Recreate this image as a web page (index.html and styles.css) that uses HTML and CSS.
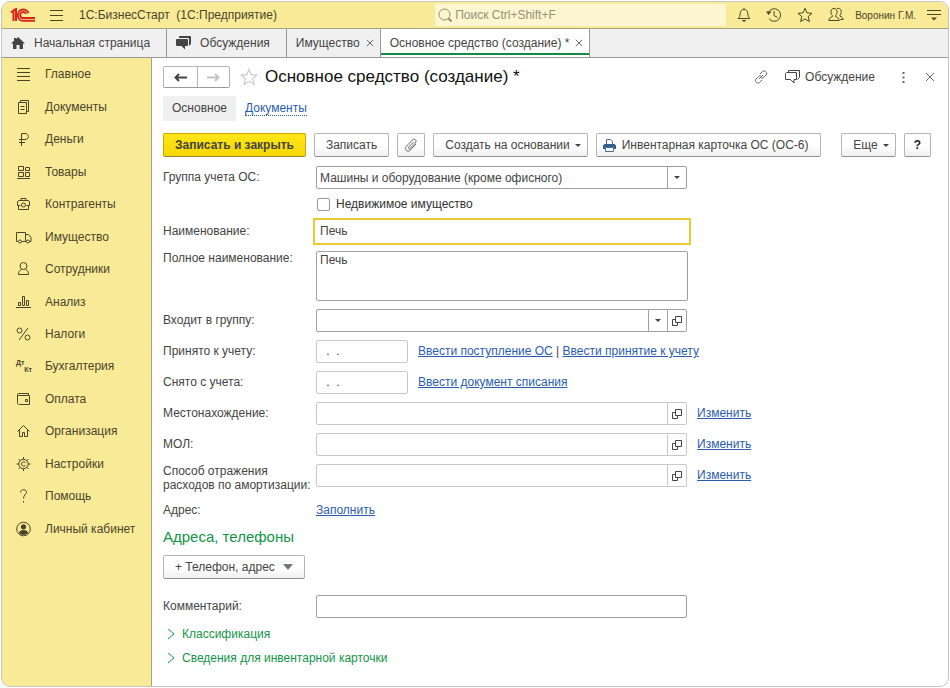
FILE: index.html
```html
<!DOCTYPE html>
<html lang="ru">
<head>
  <meta charset="UTF-8">
  <meta name="viewport" content="width=device-width, initial-scale=1.0">
  <title>1С:БизнесСтарт | Основное средство</title>
  <link rel="stylesheet" href="styles.css">
</head>
<body>
  <!-- общие иконки -->
  <svg class="sprite" width="0" height="0" aria-hidden="true">
    <symbol id="open" viewBox="0 0 10 10"><path d="M3.500 .5h6v6h-6zM3.500 3.500h-3v6h5v-3" /></symbol>
    <symbol id="chevron" viewBox="0 0 8 12"><path d="M1 1l6 5-6 5" /></symbol>
    <symbol id="cross" viewBox="0 0 10 10"><path d="M1 1l8 8M9 1L1 9" /></symbol>
    <symbol id="star" viewBox="0 0 16 16"><path d="M8 1.200l2 4.700 5 .4-3.800 3.300 1.200 5L8 11.900l-4.400 2.700 1.200-5L1 6.300l5-.4z" /></symbol>
  </svg>

  <div class="window">
    <header class="topbar">
      <svg class="logo" width="26" height="15" viewBox="0 0 26 15" aria-label="1С">
        <path d="M1 4.500l2.500-2V13M3.500 2.500L6 1v12" />
        <path d="M18.500 5A5.600 5.600 0 1 0 13.500 12.800H25" />
        <path d="M16 6A3 3 0 1 0 13.500 10H25" />
      </svg>
      <button class="icon-btn menu-btn" aria-label="Меню">
        <svg width="13" height="12" viewBox="0 0 13 12"><path d="M0 1.500h13M0 6.500h13M0 11.500h13" /></svg>
      </button>
      <span class="app-name">1С:БизнесСтарт&nbsp; (1С:Предприятие)</span>
      <label class="search">
        <svg width="15" height="15" viewBox="0 0 15 15"><circle cx="6.500" cy="6.500" r="5.500" /><path d="M10.500 10.500l3 3" stroke-width="2" /></svg>
        <input type="search" placeholder="Поиск Ctrl+Shift+F" aria-label="Поиск">
      </label>
      <div class="top-actions">
        <button class="icon-btn" aria-label="Уведомления">
          <svg width="14" height="16" viewBox="0 0 14 16"><path d="M7 1v1M1 11.500h12c-1.800-1.500-2-2.500-2.200-5C10.600 4 9.300 2.500 7 2.500S3.400 4 3.200 6.500C3 9 2.800 10 1 11.500z" /><path class="solid" d="M4.500 13h5l-2.500 2z" /></svg>
        </button>
        <button class="icon-btn" aria-label="История">
          <svg width="16" height="16" viewBox="0 0 16 16"><path d="M2.500 5.500A6.300 6.300 0 1 1 3 11.500M8 4v4.500l3.500 2" /><path class="solid" d="M0 4.500h5.500L2.500 8z" /></svg>
        </button>
        <button class="icon-btn" aria-label="Избранное">
          <svg width="16" height="16"><use href="#star" /></svg>
        </button>
        <button class="icon-btn" aria-label="Пользователи">
          <svg width="16" height="16" viewBox="0 0 16 16"><path d="M6 1.500c2.200 0 3.200 1.500 3 3.800-.1 1.700-.8 2.700-1.300 3.200v1.200c1.500.8 3.200 1 3.500 3.800H.8c.3-2.800 2-3 3.500-3.800V8.500C3.800 8 3.100 7 3 5.300c-.2-2.300.8-3.800 3-3.800z" /><path d="M9 1.500c2.800-.8 4.500 1 4.200 3.800-.1 1.500-.7 2.200-1.200 2.700v1.200c1.500.8 2.800 1 3.200 3.300h-3" /></svg>
        </button>
        <button class="user">Воронин Г.М.</button>
        <button class="icon-btn" aria-label="Настройки окна">
          <svg width="14" height="12" viewBox="0 0 14 12"><path d="M0 1.500h14M0 5.500h14" /><path class="solid" d="M4 8.500h6l-3 3z" /></svg>
        </button>
      </div>
    </header>

    <nav class="tabs">
      <a class="tab tab-home" href="#">
        <svg class="solid" width="14" height="12" viewBox="0 0 14 12"><path d="M7 0l7 6.500h-2V12H8.500V8h-3v4H2V6.500H0l3-2.800V1h2v1z" /></svg>
        Начальная страница
      </a>
      <a class="tab tab-talks" href="#">
        <svg class="solid" width="15" height="14" viewBox="0 0 15 14"><path d="M4 0h10a1 1 0 0 1 1 1v7l-2 2V3a1 1 0 0 0-1-1H3V1a1 1 0 0 1 1-1z" /><path d="M1 3h10a1 1 0 0 1 1 1v5a1 1 0 0 1-1 1H9v3.500L5.500 10H1a1 1 0 0 1-1-1V4a1 1 0 0 1 1-1z" /></svg>
        Обсуждения
      </a>
      <a class="tab" href="#">Имущество <svg width="8" height="8"><use href="#cross" /></svg></a>
      <a class="tab active" href="#">Основное средство (создание) * <svg width="8" height="8"><use href="#cross" /></svg></a>
    </nav>

    <div class="workspace">
      <nav class="sidebar">
        <a href="#"><svg viewBox="0 0 16 16"><path d="M1 2.500h13M1 6.500h13M1 10.500h13M1 14.500h13" /></svg>Главное</a>
        <a href="#"><svg viewBox="0 0 16 16"><path d="M2.500 3.500h8v11h-8zM4.500 3V1.500h8v11H11M4.500 7.500h4M4.500 10.500h4" /></svg>Документы</a>
        <a href="#"><svg viewBox="0 0 16 16"><path d="M5.500 15V2.500H9c4.500 0 4.500 6 0 6H3M3 11.500h6" /></svg>Деньги</a>
        <a href="#"><svg viewBox="0 0 16 16"><path d="M2.500 2.500h5v4h-5zM9.500 3.500h4v3h-4zM2.500 8.500h5v4h-5zM9.500 8.500h4v4h-4zM1 14.500h13" /></svg>Товары</a>
        <a href="#"><svg viewBox="0 0 16 16"><path d="M5 4V2.500h5V4M3 4.500h9l1.500 1v4h-3M1.500 5.500v4h3M1.500 5.500l1.500-1M2.500 9.500v4h10v-4" /><circle cx="7.500" cy="9" r="2" /></svg>Контрагенты</a>
        <a href="#"><svg viewBox="0 0 16 16"><path d="M2 12.500H.5v-9h9v9H6M9.500 5.500h3l2.500 3v4h-1.500M9.500 12.500h1" /><circle cx="4" cy="12.500" r="1.500" /><circle cx="12" cy="12.500" r="1.500" /></svg>Имущество</a>
        <a href="#"><svg viewBox="0 0 16 16"><circle cx="7.500" cy="5" r="3.500" /><path d="M5.500 8.500c-2 1-3 2-3 5h10c0-3-1-4-3-5" /></svg>Сотрудники</a>
        <a href="#"><svg viewBox="0 0 16 16"><path d="M2.500 8.500h2v3h-2zM6.500 2.500h2v9h-2zM10.500 6.500h2v5h-2zM0 13.500h15" /></svg>Анализ</a>
        <a href="#"><svg viewBox="0 0 16 16"><circle cx="3.500" cy="4.500" r="2.500" /><circle cx="11.500" cy="11.500" r="2.500" /><path d="M12 2L3 14" /></svg>Налоги</a>
        <a href="#"><span class="dtkt"><span>Дт</span><span>Кт</span></span>Бухгалтерия</a>
        <a href="#"><svg viewBox="0 0 16 16"><path d="M12.500 4.500V2.500h-10c-1.300 0-1.300 2 0 2h11v9h-10c-1.500 0-2-.5-2-2v-8" /><path d="M9.500 8.500h2v2h-2z" /></svg>Оплата</a>
        <a href="#"><svg viewBox="0 0 16 16"><path d="M1.500 8.500l6-6 6 6M3.500 7v6.500h3v-4h2v4h3V7" /></svg>Организация</a>
        <a href="#"><svg viewBox="0 0 16 16"><circle cx="7.500" cy="8" r="4.700" /><path d="M9.500 6.700a2.200 2.200 0 1 0 0 2.600M7.500 3.300V1M7.500 15v-2.300M2.800 8H.5M14.500 8h-2.300M4.200 4.700L2.600 3.100M10.800 4.700l1.600-1.600M4.200 11.300l-1.600 1.600M10.800 11.300l1.600 1.600" /></svg>Настройки</a>
        <a href="#"><svg viewBox="0 0 16 16"><path d="M4.500 4.500c0-4 6.500-3.500 6 0-.3 2-3 2.500-3 6M7.500 13v1.500" /></svg>Помощь</a>
        <a href="#"><svg viewBox="0 0 16 16"><circle cx="7.500" cy="8" r="6.800" /><circle class="solid" cx="7.500" cy="5.800" r="2.600" /><path class="solid" d="M3 12c0-4 9-4 9 0-2 2.500-7 2.500-9 0z" /></svg>Личный кабинет</a>
      </nav>

      <main class="content">
        <div class="title-row">
          <div class="history">
            <button aria-label="Назад"><svg width="13" height="9" viewBox="0 0 13 9"><path d="M13 4.500H2M5 1L1.500 4.500 5 8" /></svg></button>
            <button aria-label="Вперед" disabled><svg width="13" height="9" viewBox="0 0 13 9"><path d="M0 4.500h11M8 1l3.500 3.500L8 8" /></svg></button>
          </div>
          <button class="icon-btn favorite" aria-label="В избранное"><svg width="18" height="18"><use href="#star" /></svg></button>
          <h1>Основное средство (создание) *</h1>
          <div class="title-actions">
            <button class="icon-btn" aria-label="Ссылка">
              <svg width="14" height="14" viewBox="0 0 14 14"><path d="M5 9l4-4M6 4l2.500-2.500c2-1.800 5.500 1 3.500 3.500L9.500 7.500C8.700 8.300 8 8.400 7 8M8 10l-2.500 2.500C3.500 14.300 0 11.500 2 9l2.500-2.500C5.300 5.700 6 5.600 7 6" /></svg>
            </button>
            <button class="icon-btn discuss">
              <svg width="15" height="14" viewBox="0 0 15 14"><path d="M3.500 2V.5h11v7l-2 2M1.500 2.500h10v7H9V13L5.500 9.500H.5v-6z" /></svg>
              Обсуждение
            </button>
            <button class="icon-btn dots" aria-label="Еще"><svg width="3" height="11" viewBox="0 0 3 11"><path class="solid" d="M.5 0h2v2h-2zM.5 4.500h2v2h-2zM.5 9h2v2h-2z" /></svg></button>
            <button class="icon-btn" aria-label="Закрыть"><svg width="10" height="10"><use href="#cross" /></svg></button>
          </div>
        </div>

        <div class="subtabs">
          <span class="current">Основное</span>
          <a href="#">Документы</a>
        </div>

        <div class="toolbar">
          <button class="btn primary">Записать и закрыть</button>
          <button class="btn">Записать</button>
          <button class="btn clip" aria-label="Присоединенные файлы">
            <svg width="14" height="14" viewBox="0 0 14 14"><path d="M9.500 4L4.800 9c-1 1.200.5 2.400 1.500 1.400l5-5.400C13.500 2.500 10.500-.2 8.300 2L2.500 8.200C-.5 11.500 3.500 15 6.500 12l5.500-6" /></svg>
          </button>
          <button class="btn has-menu">Создать на основании <i class="caret"></i></button>
          <button class="btn print">
            <svg width="13" height="13" viewBox="0 0 13 13"><path fill="#fff" stroke="#4a6a8c" d="M3.500 5.500v-5h4l2 2v3" /><path fill="#31618f" d="M1.500 5h10L13 6.500V10h-2V8H2v2H0V6.500z" /><path fill="#fff" stroke="#4a6a8c" d="M2.500 8.500h8v4h-8z" /></svg>
            Инвентарная карточка ОС (ОС-6)
          </button>
          <button class="btn has-menu more">Еще <i class="caret"></i></button>
          <button class="btn help">?</button>
        </div>

        <form class="form">
          <div class="row">
            <label for="assetGroup">Группа учета ОС:</label>
            <div class="field">
              <select id="assetGroup"><option>Машины и оборудование (кроме офисного)</option></select>
              <button type="button" aria-label="Выбрать"><i class="caret"></i></button>
            </div>
          </div>
          <div class="row check-row">
            <input type="checkbox" id="realty">
            <label for="realty">Недвижимое имущество</label>
          </div>
          <div class="row">
            <label for="name">Наименование:</label>
            <div class="field focused"><input type="text" id="name" value="Печь"></div>
          </div>
          <div class="row text-row">
            <label for="fullName">Полное наименование:</label>
            <textarea id="fullName">Печь</textarea>
          </div>
          <div class="row">
            <label for="parent">Входит в группу:</label>
            <div class="field">
              <select id="parent"><option></option></select>
              <button type="button" aria-label="Выбрать"><i class="caret"></i></button>
              <button type="button" aria-label="Открыть"><svg width="10" height="10"><use href="#open" /></svg></button>
            </div>
          </div>
          <div class="row">
            <label for="accepted">Принято к учету:</label>
            <div class="field light date"><input type="text" id="accepted" value=" .  ."></div>
            <span class="links"><a href="#">Ввести поступление ОС</a> | <a href="#">Ввести принятие к учету</a></span>
          </div>
          <div class="row">
            <label for="removed">Снято с учета:</label>
            <div class="field light date"><input type="text" id="removed" value=" .  ."></div>
            <span class="links"><a href="#">Ввести документ списания</a></span>
          </div>
          <div class="row">
            <label for="place">Местонахождение:</label>
            <div class="field light">
              <input type="text" id="place">
              <button type="button" aria-label="Открыть"><svg width="10" height="10"><use href="#open" /></svg></button>
            </div>
            <span class="links"><a href="#">Изменить</a></span>
          </div>
          <div class="row">
            <label for="mol">МОЛ:</label>
            <div class="field light">
              <input type="text" id="mol">
              <button type="button" aria-label="Открыть"><svg width="10" height="10"><use href="#open" /></svg></button>
            </div>
            <span class="links"><a href="#">Изменить</a></span>
          </div>
          <div class="row">
            <label class="two-lines" for="expense">Способ отражения<br>расходов по амортизации:</label>
            <div class="field light">
              <input type="text" id="expense">
              <button type="button" aria-label="Открыть"><svg width="10" height="10"><use href="#open" /></svg></button>
            </div>
            <span class="links"><a href="#">Изменить</a></span>
          </div>
          <div class="row address-row">
            <span class="caption">Адрес:</span>
            <a href="#">Заполнить</a>
          </div>

          <h2>Адреса, телефоны</h2>
          <button type="button" class="btn add-contact">+ Телефон, адрес <i class="caret big"></i></button>

          <div class="row comment-row">
            <label for="comment">Комментарий:</label>
            <div class="field"><input type="text" id="comment"></div>
          </div>

          <button type="button" class="expander"><svg width="8" height="12"><use href="#chevron" /></svg>Классификация</button>
          <button type="button" class="expander"><svg width="8" height="12"><use href="#chevron" /></svg>Сведения для инвентарной карточки</button>
        </form>
      </main>
    </div>
  </div>
</body>
</html>
```
FILE: styles.css
```css
* {
  box-sizing: border-box;
}
body {
  margin: 0;
  padding: 1px;
  background: #fff;
  color: #444;
  font-family: "Liberation Sans", Arial, sans-serif;
  font-size: 12px;
}
button, input, select, textarea {
  font: inherit;
  color: inherit;
  margin: 0;
}
button {
  padding: 0;
  border: none;
  background: none;
  cursor: pointer;
}
svg {
  flex: none;
  fill: none;
  stroke: currentColor;
}
.solid {
  fill: currentColor;
  stroke: none;
}
.sprite {
  position: absolute;
}
a {
  color: #2a5db0;
}
.window {
  display: flex;
  flex-direction: column;
  min-height: calc(100vh - 2px);
  border: 1px solid #c4c4c4;
  border-radius: 9px;
  overflow: hidden;
}

/* верхняя панель */
.topbar {
  display: flex;
  align-items: center;
  height: 27px;
  padding: 0 7px 0 8px;
  background: #f9ea98;
  border-bottom: 1px solid #a8a180;
  color: #4a4528;
}
.logo {
  color: #d8261c;
  stroke-width: 2;
}
.icon-btn {
  display: flex;
  align-items: center;
}
.menu-btn {
  margin-left: 14px;
}
.app-name {
  flex: 1;
  margin-left: 16px;
}
.search {
  display: flex;
  align-items: center;
  gap: 2px;
  width: 291px;
  height: 22px;
  padding-left: 3px;
  background: #fdf6d0;
  color: #8f8a6c;
}
.search input {
  flex: 1;
  min-width: 0;
  padding: 0;
  border: none;
  outline: none;
  background: none;
}
.search input::placeholder {
  color: #96917a;
}
.top-actions {
  display: flex;
  align-items: center;
  gap: 15px;
  margin-left: 11px;
}
.user {
  margin: 0 -4px;
  font-size: 10px;
}

/* открытые окна */
.tabs {
  display: flex;
  height: 29px;
  background: #f0f0f0;
  border-bottom: 1px solid #999;
}
.tab {
  display: flex;
  align-items: center;
  gap: 6px;
  padding: 0 6px 0 9px;
  border-right: 1px solid #999;
  color: #444;
  text-decoration: none;
}
.tab-home, .tab-talks {
  gap: 9px;
  padding-right: 16px;
}
.tab.active {
  background: #fff;
  box-shadow: inset 0 -2px #fff, inset 0 -4px #168a43;
}

.workspace {
  display: flex;
  flex: 1;
}
.sidebar {
  display: flex;
  flex-direction: column;
  flex: none;
  width: 150px;
  padding-bottom: 141px;
  background: #f9ea98;
  border-right: 1px solid #a8a180;
}
.sidebar a {
  display: flex;
  flex: 1;
  align-items: center;
  gap: 13px;
  padding-left: 14px;
  color: #4a4528;
  text-decoration: none;
}
.sidebar svg {
  width: 16px;
  height: 16px;
}
.dtkt {
  display: flex;
  flex-direction: column;
  width: 16px;
  font-size: 7px;
  font-weight: bold;
  line-height: 7px;
}
.dtkt span:last-child {
  align-self: flex-end;
}

/* форма */
.content {
  flex: 1;
  min-width: 0;
  padding: 8px 17px 8px 11px;
}
.title-row {
  display: flex;
  align-items: center;
  height: 22px;
}
.history {
  display: flex;
  height: 22px;
  border: 1px solid #b4b4b4;
  border-bottom-color: #999;
  border-radius: 2px;
}
.history button {
  display: flex;
  align-items: center;
  justify-content: center;
  width: 33px;
  stroke-width: 2;
}
.history button + button {
  width: 32px;
  border-left: 1px solid #b4b4b4;
  color: #c4c4c4;
}
.favorite {
  margin: 0 7px 0 10px;
  color: #c8c8c8;
}
h1 {
  margin: 0;
  color: #111;
  font-size: 17px;
  font-weight: normal;
}
.title-actions {
  display: flex;
  align-items: center;
  gap: 17px;
  margin-left: auto;
  margin-right: -4px;
  color: #666;
}
.discuss {
  gap: 5px;
  color: #444;
}
.dots {
  margin: 0 3px 0 10px;
}
.subtabs {
  display: flex;
  align-items: center;
  gap: 9px;
  margin-top: 8px;
}
.subtabs .current {
  padding: 0 9px;
  background: #f0f0f0;
  line-height: 25px;
}
.subtabs a {
  border-bottom: 1px dotted #2a5db0;
  line-height: 14px;
  text-decoration: none;
}
.toolbar {
  display: flex;
  gap: 8px;
  margin-top: 12px;
}
.btn {
  display: flex;
  align-items: center;
  gap: 5px;
  height: 24px;
  padding: 0 11px;
  border: 1px solid #b4b4b4;
  border-bottom-color: #8f8f8f;
  border-radius: 2px;
  background: linear-gradient(#fff 50%, #f0f0f0);
  white-space: nowrap;
}
.btn.primary {
  border-color: #c9ab00;
  border-bottom-color: #96803c;
  background: linear-gradient(#ffe71a, #f7d600);
  font-weight: bold;
}
.btn.clip {
  padding: 0 6px;
  color: #666;
}
.btn.has-menu {
  padding-right: 6px;
}
.btn.print {
  gap: 6px;
  padding-left: 6px;
}
.btn.print svg {
  stroke: none;
}
.btn.more {
  margin-left: auto;
}
.btn.help {
  padding: 0 9px;
  color: #222;
  font-weight: bold;
}
.caret {
  border: 3px solid transparent;
  border-top-color: #444;
  border-bottom-width: 0;
}
.caret.big {
  margin-left: 3px;
  border-width: 6px 5px 0;
  border-top-color: #777;
}

.form {
  display: flex;
  flex-direction: column;
  align-items: flex-start;
  gap: 8px;
  margin-top: 9px;
}
.row {
  display: flex;
  width: 100%;
  line-height: 23px;
}
.row > label:first-child, .caption {
  flex: none;
  width: 153px;
}
.row .two-lines {
  line-height: 14px;
  white-space: nowrap;
}
.text-row {
  line-height: 15px;
}
.address-row {
  line-height: 20px;
}
.field {
  display: flex;
  width: 371px;
  height: 23px;
  border: 1px solid #a0a0a0;
  border-radius: 2px;
}
.field.light {
  border-color: #c8c8c8;
}
.field.date {
  width: 92px;
}
.field input, .field select {
  flex: 1;
  min-width: 0;
  padding: 0 3px;
  border: none;
  outline: none;
  background: none;
  appearance: none;
}
.field.date input {
  padding-left: 6px;
}
.field button {
  display: flex;
  align-items: center;
  justify-content: center;
  width: 19px;
  border-left: 1px solid #a0a0a0;
}
.field.light button {
  border-color: #c8c8c8;
}
.field.focused {
  width: 378px;
  height: 27px;
  margin: -2px -3px;
  border: 2px solid #eac933;
  border-radius: 0;
}
.field.focused input {
  padding-left: 5px;
}
textarea {
  width: 372px;
  height: 50px;
  padding: 1px 3px;
  border: 1px solid #a0a0a0;
  border-radius: 2px;
  line-height: 15px;
  resize: none;
}
.check-row {
  align-items: center;
  gap: 6px;
  padding-left: 154px;
  color: #333;
  line-height: 15px;
}
.check-row input {
  width: 13px;
  height: 13px;
  border: 1px solid #999;
  border-radius: 2px;
  background: #fff;
  appearance: none;
}
.check-row input:checked {
  background: #eac933;
}
.links {
  margin-left: 10px;
}
h2 {
  margin: 0;
  color: #149447;
  font-size: 15px;
  font-weight: normal;
  line-height: 18px;
}
.add-contact {
  margin-top: 1px;
}
.comment-row {
  margin-top: 8px;
}
.expander {
  display: flex;
  align-items: center;
  gap: 7px;
  padding-left: 4px;
  color: #149447;
  line-height: 16px;
}
```
